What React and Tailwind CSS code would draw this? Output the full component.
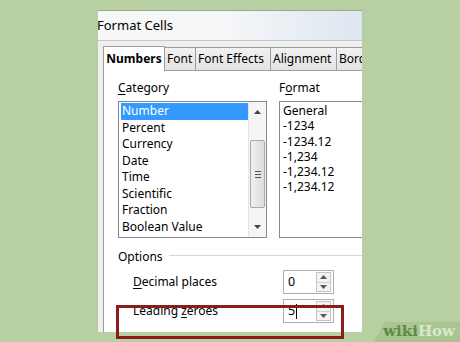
import React from "react";

const font = { fontFamily: '"Noto Sans", "Open Sans", sans-serif' };

function Spin({ value, cursor }) {
  return (
    <div className="flex h-[24px] w-[51px] shrink-0 items-center border border-[#abadb3] bg-white">
      <div className="flex flex-1 items-center pl-[4px] text-[12.5px] text-black">
        {value}
        {cursor && <span className="ml-[1px] inline-block h-[15px] w-[1px] bg-black" />}
      </div>
      <div className="mr-[2px] flex h-[20px] w-[15px] flex-col border border-[#c4c4c4] bg-[#f4f4f4]">
        <div className="flex flex-1 items-center justify-center border-b border-[#d0d0d0]">
          <svg width="7" height="4" viewBox="0 0 7 4"><path d="M0 4 L3.5 0 L7 4Z" fill="#555" /></svg>
        </div>
        <div className="flex flex-1 items-center justify-center">
          <svg width="7" height="4" viewBox="0 0 7 4"><path d="M0 0 L3.5 4 L7 0Z" fill="#555" /></svg>
        </div>
      </div>
    </div>
  );
}

export default function App() {
  const cats = ["Number", "Percent", "Currency", "Date", "Time", "Scientific", "Fraction", "Boolean Value"];
  const fmts = ["General", "-1234", "-1234.12", "-1,234", "-1,234.12", "-1,234.12"];
  const tabs = [
    { t: "Font", w: 31 },
    { t: "Font Effects", w: 75 },
    { t: "Alignment", w: 66 },
    { t: "Borders", w: 40 },
  ];
  return (
    <div className="relative h-[342px] w-[460px] overflow-hidden bg-[#b8cfa1]" style={font}>
      <div className="pl-[98px] pt-[10px]">
        <div className="flex h-[322px] w-[264px] flex-col overflow-hidden border-t border-[#9aa88e] bg-[#f0f0f0]">
          {/* title bar */}
          <div className="flex h-[30px] shrink-0 items-center border-b border-[#c8c8c8] bg-gradient-to-r from-[#f7f7f7] via-[#f4f6f8] to-[#dde6f0] text-[13px] text-black">
            <span className="-ml-[1px]">Format Cells</span>
          </div>
          <div className="flex flex-1 flex-col pl-[5px] pt-[5px]">
            {/* tabs */}
            <div className="flex h-[24px] shrink-0 items-end">
              <div className="relative z-10 -mb-[1px] flex h-[25px] w-[62px] shrink-0 items-center justify-center border border-b-0 border-[#9c9c9c] bg-white text-[12px] font-bold text-black">
                Numbers
              </div>
              {tabs.map((tb) => (
                <div
                  key={tb.t}
                  className="flex h-[23px] shrink-0 items-center overflow-hidden whitespace-nowrap border border-l-0 border-b-0 border-[#9c9c9c] bg-gradient-to-b from-[#f2f2f2] to-[#e3e3e3] pl-[2px] text-[12px] text-black"
                  style={{ width: tb.w }}
                >
                  {tb.t}
                </div>
              ))}
            </div>
            {/* panel */}
            <div className="flex flex-1 flex-col border-l border-t border-[#9c9c9c] bg-white pl-[14px]">
              <div className="flex pt-[7px]">
                <div className="flex w-[149px] shrink-0 flex-col">
                  <div className="h-[22px] text-[12px] leading-[20px] text-black">
                    <span className="underline decoration-1 underline-offset-2">C</span>ategory
                  </div>
                  <div className="mt-[1px] flex h-[137px] border border-[#828790] bg-white">
                    <div className="flex flex-1 flex-col pl-[2px] pt-[1px]">
                      {cats.map((c, i) => (
                        <div
                          key={c}
                          className={
                            "h-[16.5px] pl-[1px] text-[12px] leading-[16.5px] " +
                            (i === 0 ? "bg-[#3399ff] text-white" : "text-black")
                          }
                        >
                          {c}
                        </div>
                      ))}
                    </div>
                    <div className="flex w-[18px] flex-col items-center border-l border-[#e6e6e6] bg-[#f5f5f5]">
                      <div className="flex h-[20px] items-center justify-center">
                        <svg width="7" height="4" viewBox="0 0 7 4"><path d="M0 4 L3.5 0 L7 4Z" fill="#444" /></svg>
                      </div>
                      <div className="mt-[18px] flex h-[68px] w-[15px] items-center justify-center rounded-[2px] border border-[#a8a8a8] bg-gradient-to-r from-[#f0f0f0] to-[#dcdcdc]">
                        <div className="flex flex-col gap-[2px]">
                          <div className="h-[1px] w-[6px] bg-[#555]" />
                          <div className="h-[1px] w-[6px] bg-[#555]" />
                          <div className="h-[1px] w-[6px] bg-[#555]" />
                        </div>
                      </div>
                      <div className="flex flex-1 items-end justify-center pb-[8px]">
                        <svg width="7" height="4" viewBox="0 0 7 4"><path d="M0 0 L3.5 4 L7 0Z" fill="#444" /></svg>
                      </div>
                    </div>
                  </div>
                </div>
                <div className="ml-[12px] flex w-[120px] shrink-0 flex-col">
                  <div className="h-[22px] text-[12px] leading-[20px] text-black">
                    F<span className="underline decoration-1 underline-offset-2">o</span>rmat
                  </div>
                  <div className="mt-[1px] flex h-[137px] flex-col border border-[#828790] bg-white pl-[3px] pt-[1px]">
                    {fmts.map((f, i) => (
                      <div key={i} className="h-[15.3px] text-[12px] leading-[15.3px] text-black">
                        {f}
                      </div>
                    ))}
                  </div>
                </div>
              </div>
              {/* options */}
              <div className="mt-[10px] flex items-center">
                <span className="text-[12px] text-black">Options</span>
                <div className="ml-[6px] mt-[-3px] h-[1px] flex-1 bg-[#d5d5d5]" />
              </div>
              <div className="mt-[4px] flex items-center pl-[15px] pr-[28px]">
                <span className="flex-1 text-[12px] text-black">
                  <span className="underline decoration-1 underline-offset-2">D</span>ecimal places
                </span>
                <Spin value="0" />
              </div>
              <div className="mt-[5px] flex items-center pl-[15px] pr-[28px]">
                <span className="flex-1 text-[12px] text-black">
                  Leading <span className="underline decoration-1 underline-offset-2">z</span>eroes
                </span>
                <Spin value="5" cursor />
              </div>
            </div>
          </div>
        </div>
      </div>
      {/* red highlight box */}
      <div className="absolute left-[116px] top-[305px] h-[34px] w-[228px] border-[3px] border-[#8a1c1c]" />
      {/* wikiHow watermark */}
      <div
        className="absolute bottom-0 right-0 h-[20px] w-[86px] bg-[#a9c591]"
        style={{ clipPath: "polygon(12% 0, 100% 0, 100% 100%, 0 100%)" }}
      />
      <div
        className="absolute bottom-[2px] right-[5px] text-[15px] font-bold leading-[18px]"
        style={{ fontFamily: '"DejaVu Serif", "Liberation Serif", serif' }}
      >
        <span className="text-[#5f8a4a]">wiki</span>
        <span className="text-[#dbe8cf]">How</span>
      </div>
    </div>
  );
}
